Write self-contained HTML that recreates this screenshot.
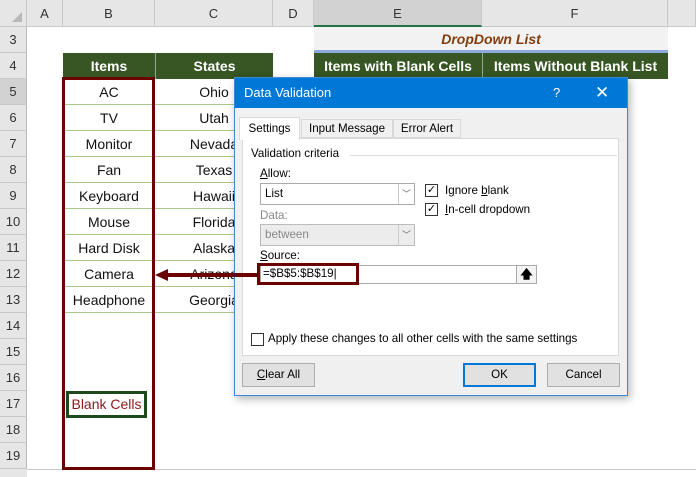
<!DOCTYPE html><html><head><style>
*{margin:0;padding:0;box-sizing:border-box}
body{width:696px;height:477px;overflow:hidden;background:#fff;font-family:"Liberation Sans",sans-serif;position:relative}
.a{position:absolute}
.hd{background:#e6e6e6;color:#333;font-size:13px;text-align:center;line-height:27px;border-right:1px solid #c8c8c8;border-bottom:1px solid #c8c8c8}
.rn{background:#e6e6e6;color:#333;font-size:13px;text-align:center;line-height:26px;width:27px;left:0;height:26px;border-bottom:1px solid #c8c8c8;border-right:1px solid #bbb}
.cell{font-size:14px;text-align:center;line-height:26px;height:26px;border-bottom:1px solid #a9c88a;color:#111}
.gh{background:#375623;color:#fff;font-weight:bold;font-size:14px;text-align:center;line-height:26px;height:26px}
.dl{font-family:"Liberation Sans",sans-serif;font-size:11.6px;color:#000}
.btn{position:absolute;height:24px;background:#e1e1e1;border:1px solid #adadad;text-align:center;line-height:22px}
.cb{position:absolute;width:13px;height:13px;border:1px solid #333;background:#fff;font-size:11px;line-height:11px;text-align:center}
</style></head><body>
<div class="a hd" style="left:0;top:0;width:27px;height:27px;background:#e6e6e6"></div>
<div class="a" style="left:12px;top:12px;width:0;height:0;border-left:10px solid transparent;border-bottom:10px solid #b8b8b8"></div>
<div class="a hd" style="left:27px;top:0;width:36px;height:27px">A</div>
<div class="a hd" style="left:63px;top:0;width:92px;height:27px">B</div>
<div class="a hd" style="left:155px;top:0;width:118px;height:27px">C</div>
<div class="a hd" style="left:273px;top:0;width:41px;height:27px">D</div>
<div class="a hd" style="left:314px;top:0;width:168px;height:27px;background:#d2d2d2;border-bottom:2px solid #217346">E</div>
<div class="a hd" style="left:482px;top:0;width:186px;height:27px">F</div>
<div class="a hd" style="left:668px;top:0;width:28px;height:27px"></div>

<div class="a rn" style="top:27px">3</div><div class="a rn" style="top:53px">4</div><div class="a rn" style="top:79px;background:#d2d2d2">5</div><div class="a rn" style="top:105px">6</div><div class="a rn" style="top:131px">7</div><div class="a rn" style="top:157px">8</div><div class="a rn" style="top:183px">9</div><div class="a rn" style="top:209px">10</div><div class="a rn" style="top:235px">11</div><div class="a rn" style="top:261px">12</div><div class="a rn" style="top:287px">13</div><div class="a rn" style="top:313px">14</div><div class="a rn" style="top:339px">15</div><div class="a rn" style="top:365px">16</div><div class="a rn" style="top:391px">17</div><div class="a rn" style="top:417px">18</div><div class="a rn" style="top:443px">19</div>
<div class="a" style="left:0;top:469px;width:696px;height:8px;background:#e6e6e6"></div>
<div class="a" style="left:27px;top:469px;width:669px;height:8px;background:#fff;border-top:1px solid #c8c8c8"></div>

<div class="a" style="left:314px;top:27px;width:354px;height:26px;background:#f2f2f2;border-bottom:3px solid #8ea9db;text-align:center;line-height:25px;font-size:14px;font-weight:bold;font-style:italic;color:#843c0c">DropDown List</div>
<div class="a gh" style="left:63px;top:53px;width:92px">Items</div>
<div class="a gh" style="left:155px;top:53px;width:118px;border-left:1px solid #8a9">States</div>
<div class="a gh" style="left:314px;top:53px;width:168px">Items with Blank Cells</div>
<div class="a gh" style="left:482px;top:53px;width:186px;border-left:1px solid #8a9">Items Without Blank List</div>

<div class="a" style="left:63px;top:79px;width:92px">
<div class="cell">AC</div><div class="cell">TV</div><div class="cell">Monitor</div><div class="cell">Fan</div><div class="cell">Keyboard</div><div class="cell">Mouse</div><div class="cell">Hard Disk</div><div class="cell">Camera</div><div class="cell">Headphone</div></div>
<div class="a" style="left:155px;top:79px;width:118px">
<div class="cell">Ohio</div><div class="cell">Utah</div><div class="cell">Nevada</div><div class="cell">Texas</div><div class="cell">Hawaii</div><div class="cell">Florida</div><div class="cell">Alaska</div><div class="cell">Arizona</div><div class="cell">Georgia</div></div>
<div class="a" style="left:62px;top:77px;width:93px;height:393px;border:3px solid #6b0000"></div>
<div class="a" style="left:66px;top:391px;width:81px;height:27px;border:3px solid #1d4a1d;color:#8b1a1a;font-size:14px;text-align:center;line-height:21px">Blank Cells</div>

<div class="a" style="left:234px;top:77px;width:394px;height:319px;background:#f0f0f0;border:1px solid #3b8ad8;box-shadow:2px 3px 8px rgba(0,0,0,.3)">
<div class="a dl" style="left:0;top:0;width:392px;height:30px;background:#0078d7;color:#fff;font-size:13px;line-height:30px;padding-left:9px">Data Validation<span style="position:absolute;left:318px">?</span><span style="position:absolute;left:360px;font-size:17px">✕</span></div>
<div class="a" style="left:7px;top:60px;width:377px;height:218px;background:#fff;border:1px solid #d9d9d9"></div>
<div class="a dl" style="left:4px;top:39px;width:61px;height:23px;background:#fff;border:1px solid #d9d9d9;border-bottom:none;text-align:center;line-height:22px">Settings</div>
<div class="a dl" style="left:66px;top:41px;width:92px;height:19px;border:1px solid #d9d9d9;text-align:center;line-height:18px">Input Message</div>
<div class="a dl" style="left:158px;top:41px;width:68px;height:19px;border:1px solid #d9d9d9;text-align:center;line-height:18px">Error Alert</div>
<div class="a dl" style="left:16px;top:69px">Validation criteria</div>
<div class="a" style="left:115px;top:77px;width:267px;border-top:1px solid #ddd"></div>
<div class="a dl" style="left:25px;top:89px"><u>A</u>llow:</div>
<div class="a dl" style="left:25px;top:105px;width:155px;height:22px;border:1px solid #aaa;background:#fff;line-height:20px;padding-left:4px">List<span style="position:absolute;right:0;top:0;width:16px;height:20px;border-left:1px solid #ccc;font-size:9px;text-align:center;color:#666">﹀</span></div>
<div class="a dl" style="left:25px;top:131px;color:#888">Data:</div>
<div class="a dl" style="left:25px;top:146px;width:155px;height:22px;border:1px solid #bbb;background:#ececec;color:#888;line-height:20px;padding-left:4px">between<span style="position:absolute;right:0;top:0;width:16px;height:20px;border-left:1px solid #ccc;font-size:9px;text-align:center;color:#666">﹀</span></div>
<div class="cb" style="left:190px;top:106px">✓</div><div class="a dl" style="left:210px;top:106px">I<u>g</u>nore <u>b</u>lank</div>
<div class="cb" style="left:190px;top:125px">✓</div><div class="a dl" style="left:210px;top:125px"><u>I</u>n-cell dropdown</div>
<div class="a dl" style="left:25px;top:171px"><u>S</u>ource:</div>
<div class="a" style="left:25px;top:187px;width:277px;height:19px;border:1px solid #aaa;background:#fff"></div>
<div class="a" style="left:281px;top:187px;width:21px;height:19px;border:1px solid #aaa;background:#f4f4f4;font-size:12px;text-align:center;line-height:17px;font-weight:bold">🡅</div>
<div class="a dl" style="left:22px;top:185px;width:102px;height:22px;border:3px solid #6b0000;line-height:16px;padding-left:3px">=$B$5:$B$19|</div>
<div class="cb" style="left:16px;top:255px"></div><div class="a dl" style="left:33px;top:254px">Apply these changes to all other cells with the same settings</div>
<div class="btn dl" style="left:7px;top:285px;width:73px"><u>C</u>lear All</div>
<div class="btn dl" style="left:228px;top:285px;width:73px;border:2px solid #0078d7;line-height:20px">OK</div>
<div class="btn dl" style="left:312px;top:285px;width:73px">Cancel</div>
</div>
<div class="a" style="left:166px;top:273px;width:91px;height:4px;background:#6b0000"></div>
<div class="a" style="left:155px;top:269px;width:0;height:0;border-top:6px solid transparent;border-bottom:6px solid transparent;border-right:13px solid #6b0000"></div>
</body></html>
